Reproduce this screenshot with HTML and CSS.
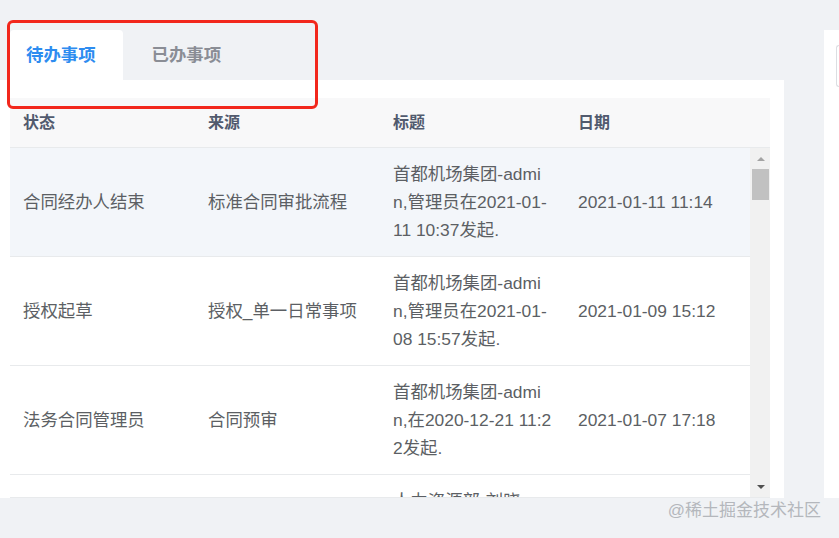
FILE: index.html
```html
<!DOCTYPE html>
<html lang="zh-CN">
<head>
<meta charset="utf-8">
<title>待办事项</title>
<link rel="stylesheet" href="styles.css">
</head>
<body>
<div class="page">
  <div class="main">
    <div class="tabs">
      <div class="tab active">待办事项</div>
      <div class="tab">已办事项</div>
    </div>
    <div class="panel">
      <div class="table">
        <div class="thead">
          <div class="row head">
            <div class="cell">状态</div>
            <div class="cell">来源</div>
            <div class="cell">标题</div>
            <div class="cell">日期</div>
          </div>
          <div class="gutter"></div>
        </div>
        <div class="tbody">
          <div class="rows">
            <div class="row hover">
              <div class="cell">合同经办人结束</div>
              <div class="cell">标准合同审批流程</div>
              <div class="cell title">首都机场集团-admi<br>n,管理员在2021-01-<br>11 10:37发起.</div>
              <div class="cell">2021-01-11 11:14</div>
            </div>
            <div class="row">
              <div class="cell">授权起草</div>
              <div class="cell">授权_单一日常事项</div>
              <div class="cell title">首都机场集团-admi<br>n,管理员在2021-01-<br>08 15:57发起.</div>
              <div class="cell">2021-01-09 15:12</div>
            </div>
            <div class="row">
              <div class="cell">法务合同管理员</div>
              <div class="cell">合同预审</div>
              <div class="cell title">首都机场集团-admi<br>n,在2020-12-21 11:2<br>2发起.</div>
              <div class="cell">2021-01-07 17:18</div>
            </div>
            <div class="row">
              <div class="cell">人力资源审批</div>
              <div class="cell">人力资源流程</div>
              <div class="cell title">人力资源部-刘晓<br>n,在2020-12-18 09:4<br>5发起.</div>
              <div class="cell">2021-01-05 10:02</div>
            </div>
          </div>
          <div class="scrollbar">
            <div class="btn"><span class="tri up"></span></div>
            <div class="thumb"></div>
            <div class="track"></div>
            <div class="btn"><span class="tri down"></span></div>
          </div>
        </div>
      </div>
    </div>
  </div>
  <div class="side">
    <div class="input"></div>
  </div>
</div>
<div class="annot"></div>
<div class="watermark">@稀土掘金技术社区</div>
</body>
</html>
```
FILE: styles.css
```css
* { box-sizing: border-box; }
html, body { margin: 0; padding: 0; }
body {
  width: 839px;
  height: 538px;
  overflow: hidden;
  background: #f0f2f5;
  font-family: "Liberation Sans", "Noto Sans CJK SC", sans-serif;
  position: relative;
}
.page {
  display: flex;
  padding-top: 30px;
  height: 498px;
}
.main {
  width: 784px;
  display: flex;
  flex-direction: column;
}
.tabs {
  display: flex;
  height: 50px;
  padding-left: 10px;
}
.tab {
  height: 50px;
  line-height: 50px;
  font-size: 17.4px;
  font-weight: bold;
  color: #8a8d95;
  padding-left: 29px;
}
.tab.active {
  background: #fff;
  color: #2d8cf0;
  border-radius: 4px 4px 0 0;
  padding: 0 27px 0 16px;
}
.panel {
  flex: 1;
  background: #fff;
  padding: 18px 14px 0 10px;
}
.table {
  width: 760px;
}
.thead {
  display: flex;
  background: #f8f8f9;
  border-bottom: 1px solid #e8eaec;
}
.gutter { width: 20px; }
.row {
  display: grid;
  grid-template-columns: repeat(4, 185px);
  border-bottom: 1px solid #e8eaec;
}
.row.head {
  height: 49px;
  border-bottom: none;
}
.row.head .cell {
  font-size: 16px;
  font-weight: bold;
  color: #515a6e;
  padding: 0 13px;
}
.cell {
  display: flex;
  align-items: center;
  padding: 12px 13px;
  font-size: 17.4px;
  line-height: 28px;
  color: #5c5f64;
  white-space: nowrap;
}
.cell.title { display: block; }
.row.hover { background: #f3f6fa; }
.tbody {
  display: flex;
  height: 350px;
  border-bottom: 1px solid #e8eaec;
  overflow: hidden;
}
.rows {
  width: 740px;
  overflow: hidden;
}
.scrollbar {
  width: 20px;
  background: #f1f1f1;
  display: flex;
  flex-direction: column;
  padding: 0 1px 0 2px;
}
.btn {
  height: 21px;
  display: flex;
  align-items: center;
  justify-content: center;
}
.tri {
  width: 0;
  height: 0;
  border-left: 4px solid transparent;
  border-right: 4px solid transparent;
}
.tri.up { border-bottom: 4px solid #a3a3a3; }
.tri.down { border-top: 4px solid #505050; }
.thumb {
  height: 31px;
  background: #c1c1c1;
}
.track { flex: 1; }
.side {
  flex: 1;
  margin-left: 40px;
  background: #fff;
  padding: 15px 0 0 12px;
}
.input {
  height: 42px;
  border: 1px solid #dcdee2;
  border-right: none;
  border-radius: 4px 0 0 4px;
}
.annot {
  position: absolute;
  left: 7px;
  top: 20px;
  width: 311px;
  height: 89px;
  border: 3px solid #f2271c;
  border-radius: 6px;
}
.watermark {
  position: absolute;
  right: 18px;
  top: 499px;
  font-size: 17px;
  line-height: 24px;
  color: #b4b7bc;
  font-family: "Liberation Sans", "Noto Sans CJK SC", sans-serif;
}
```
